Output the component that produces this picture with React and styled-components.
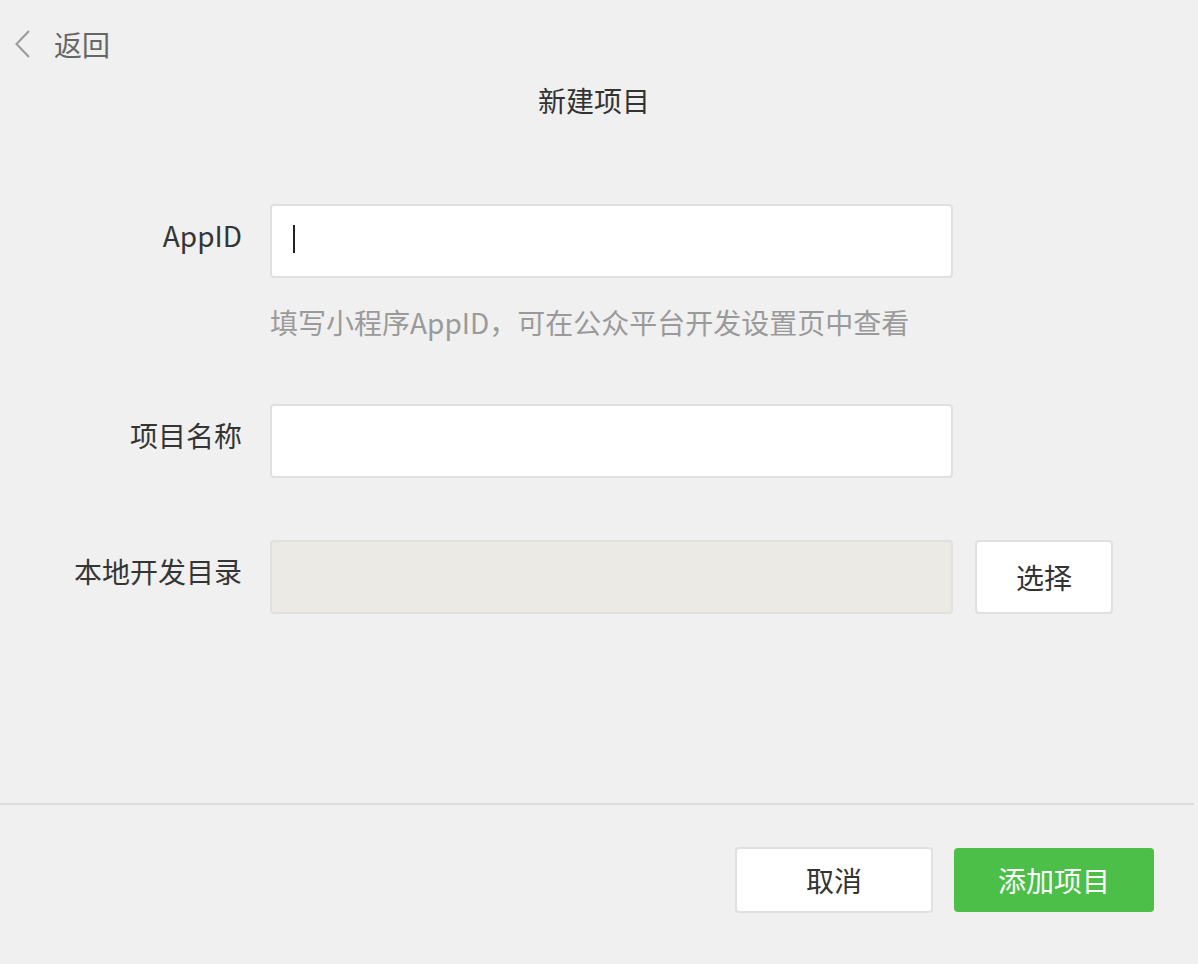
import { createGlobalStyle, styled } from "styled-components"

const GlobalStyle = createGlobalStyle`
  html, body {
    margin: 0;
    padding: 0;
    background: #f0f0f0;
  }
  body {
    font-family: "Noto Sans CJK SC", "Liberation Sans", sans-serif;
    color: #333;
  }
`

const Page = styled.div`
  width: 1194px;
  height: 964px;
  display: flex;
  flex-direction: column;
  background: #f0f0f0;
`

const TopBar = styled.div`
  padding: 30px 0 0 15px;
`

const BackLink = styled.a`
  display: inline-flex;
  align-items: center;
  height: 28px;
  font-size: 28px;
  line-height: 28px;
  color: #666;
  cursor: pointer;

  svg {
    margin-right: 23px;
  }
`

const Title = styled.h1`
  margin: 17px 0 0;
  padding-right: 6px;
  font-size: 28px;
  font-weight: 400;
  line-height: 40px;
  text-align: center;
  color: #333;
`

const Form = styled.div`
  margin-top: 84px;
  display: flex;
  flex-direction: column;
`

const Row = styled.div`
  display: flex;
  align-items: flex-start;
  margin-top: ${({ $gap }) => ($gap ? $gap : 0)}px;
`

const Label = styled.label`
  width: 242px;
  margin-right: 28px;
  text-align: right;
  font-size: 28px;
  line-height: 62px;
  color: #353535;
  white-space: nowrap;
`

const Field = styled.div`
  box-sizing: border-box;
  width: 683px;
  height: 74px;
  display: flex;
  align-items: center;
  padding-left: 21px;
  background: ${({ $disabled }) => ($disabled ? "#ebeae5" : "#fff")};
  border: 2px solid #e0e0e0;
  border-radius: 4px;
`

const Caret = styled.span`
  display: block;
  width: 2px;
  height: 28px;
  margin-top: -4px;
  background: #222;
`

const Hint = styled.div`
  margin: 24px 0 0 270px;
  font-size: 28px;
  line-height: 40px;
  color: #9a9a9a;
`

const Button = styled.button`
  box-sizing: border-box;
  font-family: inherit;
  font-size: 28px;
  cursor: pointer;
  border-radius: 4px;
  width: ${({ $w }) => $w}px;
  height: ${({ $h }) => $h}px;
  color: ${({ $primary }) => ($primary ? "#fff" : "#333")};
  background: ${({ $primary }) => ($primary ? "#4cbf48" : "#fff")};
  border: ${({ $primary }) => ($primary ? "none" : "2px solid #e0e0e0")};
  padding: 0;
`

const SideButton = styled(Button)`
  margin-left: 22px;
`

const Footer = styled.div`
  margin-top: auto;
  margin-bottom: 51px;
  border-top: 2px solid #dcdcdc;
  padding: 42px 40px 0 0;
  display: flex;
  justify-content: flex-end;
  align-items: center;
  gap: 21px;
`

export default function App() {
  return (
    <>
      <GlobalStyle />
      <Page>
        <TopBar>
          <BackLink>
            <svg width="16" height="28" viewBox="0 0 16 28">
              <path d="M14 1 L1.5 14 L14 27" fill="none" stroke="#9a9a9a" strokeWidth="2" />
            </svg>
            返回
          </BackLink>
        </TopBar>
        <Title>新建项目</Title>

        <Form>
          <Row>
            <Label>AppID</Label>
            <Field>
              <Caret />
            </Field>
          </Row>
          <Hint>填写小程序AppID，可在公众平台开发设置页中查看</Hint>
          <Row $gap={62}>
            <Label>项目名称</Label>
            <Field />
          </Row>
          <Row $gap={62}>
            <Label>本地开发目录</Label>
            <Field $disabled />
            <SideButton $w={138} $h={74}>选择</SideButton>
          </Row>
        </Form>

        <Footer>
          <Button $w={198} $h={66}>取消</Button>
          <Button $primary $w={200} $h={64}>添加项目</Button>
        </Footer>
      </Page>
    </>
  )
}
